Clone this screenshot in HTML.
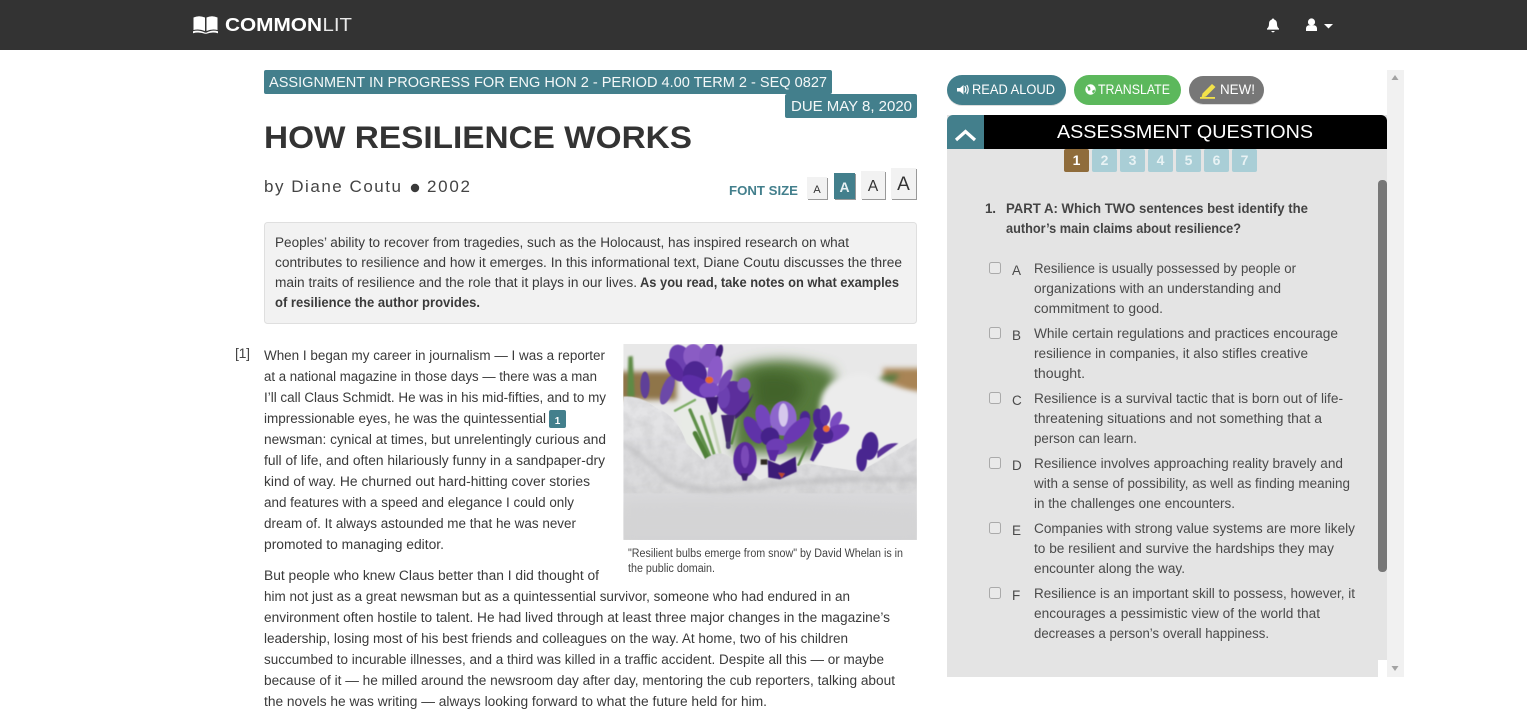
<!DOCTYPE html>
<html lang="en"><head><meta charset="utf-8"><title>How Resilience Works</title>
<style>
html,body{margin:0;padding:0;background:#fff;width:1527px;height:726px;overflow:hidden}
svg{display:block}
text{font-family:"Liberation Sans",sans-serif}
.b text,.b{font-size:13.5px;fill:#3a3a3a}
.q text{font-size:13.5px;fill:#4a4a4a}
.bd{font-weight:bold}
</style></head><body>
<svg width="1527" height="726" viewBox="0 0 1527 726" xmlns="http://www.w3.org/2000/svg">
<defs>
<filter id="bl1" x="-20%" y="-20%" width="140%" height="140%"><feGaussianBlur stdDeviation="1.500"/></filter>
<filter id="bl2" x="-30%" y="-30%" width="160%" height="160%"><feGaussianBlur stdDeviation="3"/></filter>
<filter id="bl6" x="-40%" y="-40%" width="180%" height="180%"><feGaussianBlur stdDeviation="8"/></filter>
<filter id="bl14" x="-50%" y="-50%" width="200%" height="200%"><feGaussianBlur stdDeviation="18"/></filter>
<filter id="sn" x="0" y="0" width="100%" height="100%"><feTurbulence type="fractalNoise" baseFrequency="0.03" numOctaves="3" seed="4"/><feColorMatrix values="0 0 0 0 0.45 0 0 0 0 0.45 0 0 0 0 0.46 1 0 0 0 -0.3"/><feComposite in2="SourceAlpha" operator="in"/></filter>
<clipPath id="ic"><rect x="10" y="12" width="881" height="588"/></clipPath>
<linearGradient id="sg" x1="0" y1="0" x2="0" y2="1"><stop offset="0" stop-color="#e6e6e8"/><stop offset=".55" stop-color="#dcdcde"/><stop offset="1" stop-color="#d2d2d3"/></linearGradient>
</defs>

<!-- nav -->
<rect width="1527" height="50" fill="#333"/>
<g fill="#fff">
<path d="M193.500 17.500Q199 15 205 17.500V31Q199 28.500 193.500 30Z"/>
<path d="M206.500 17.500Q212 15 217.500 17.500V30Q212 28.500 206.500 31Z"/>
<path d="M193 31.200Q199 29.500 205 32.600H206.500Q212 29.500 218 31.200V33.200Q212 31.500 206.500 33.800H205Q199 31.500 193 33.200Z"/>
<text x="225" y="31" font-size="18.500" font-weight="bold" textLength="97" lengthAdjust="spacingAndGlyphs">COMMON</text>
<text x="322.500" y="31" font-size="18.500" textLength="29.500" lengthAdjust="spacingAndGlyphs" fill="#e8e8e8">LIT</text>
<path d="M1273 18.500c.8 0 1.300.5 1.400 1.200 2 .6 2.600 2.300 2.600 4.300 0 2.200.7 3.500 2 4.600v1h-12v-1c1.300-1.100 2-2.400 2-4.600 0-2 .6-3.700 2.600-4.300.1-.7.600-1.200 1.400-1.200zM1271.300 31h3.400c-.2.900-.9 1.400-1.700 1.400s-1.500-.5-1.700-1.400z"/>
<circle cx="1311.500" cy="22" r="3.600"/>
<path d="M1306 31v-2.500c0-2 1.500-3.300 3.300-3.300h4.400c1.800 0 3.300 1.300 3.300 3.300V31z"/>
<path d="M1324 24h9l-4.500 4.500z"/>
</g>

<!-- assignment badges -->
<rect x="264" y="70" width="568" height="24" rx="2" fill="#437f8c"/>
<rect x="785" y="94" width="132" height="24" rx="2" fill="#437f8c"/>
<text x="269" y="87" font-size="15" fill="#f4f8f8" textLength="558" lengthAdjust="spacingAndGlyphs">ASSIGNMENT IN PROGRESS FOR ENG HON 2 - PERIOD 4.00 TERM 2 - SEQ 0827</text>
<text x="791" y="111" font-size="15" fill="#f4f8f8" textLength="121" lengthAdjust="spacingAndGlyphs">DUE MAY 8, 2020</text>

<text x="264" y="148" font-size="31.500" font-weight="bold" fill="#333" textLength="428" lengthAdjust="spacingAndGlyphs">HOW RESILIENCE WORKS</text>
<text x="264" y="192" font-size="17" fill="#444" textLength="137" lengthAdjust="spacing">by Diane Coutu</text>
<circle cx="415" cy="188" r="4.200" fill="#3a3a3a"/>
<text x="427" y="192" font-size="17" fill="#444" textLength="43" lengthAdjust="spacing">2002</text>

<!-- font size -->
<text x="729" y="195" font-size="13" font-weight="bold" fill="#437f8c" textLength="69" lengthAdjust="spacingAndGlyphs">FONT SIZE</text>
<g>
<rect x="808" y="178" width="20" height="22" fill="#999"/><rect x="807" y="177" width="20" height="22" fill="#f2f2f2"/>
<rect x="835" y="174" width="21" height="26" fill="#999"/><rect x="834" y="173" width="21" height="26" fill="#437f8c"/>
<rect x="862" y="172" width="24" height="28" fill="#999"/><rect x="861" y="171" width="24" height="28" fill="#f2f2f2"/>
<rect x="892" y="169" width="25" height="31" fill="#999"/><rect x="891" y="168" width="25" height="31" fill="#f2f2f2"/>
<text x="817" y="193" font-size="11" text-anchor="middle" fill="#333">A</text>
<text x="844.500" y="192" font-size="14" font-weight="bold" text-anchor="middle" fill="#e8f0f2">A</text>
<text x="873" y="191" font-size="15.500" text-anchor="middle" fill="#333">A</text>
<text x="903.500" y="190" font-size="19" text-anchor="middle" fill="#333">A</text>
</g>

<!-- intro -->
<rect x="264.500" y="222.500" width="652" height="101" rx="3" fill="#f2f2f2" stroke="#dfdfdf"/>
<g class="q">
<text x="275" y="247" textLength="574" lengthAdjust="spacingAndGlyphs" style="fill:#3a3a3a">Peoples’ ability to recover from tragedies, such as the Holocaust, has inspired research on what</text>
<text x="275" y="267" textLength="627" lengthAdjust="spacingAndGlyphs" style="fill:#3a3a3a">contributes to resilience and how it emerges. In this informational text, Diane Coutu discusses the three</text>
<text x="275" y="287" textLength="362" lengthAdjust="spacingAndGlyphs" style="fill:#3a3a3a">main traits of resilience and the role that it plays in our lives.</text>
<text x="640" y="287" textLength="259" lengthAdjust="spacingAndGlyphs" class="bd" style="fill:#3a3a3a">As you read, take notes on what examples</text>
<text x="275" y="307" textLength="205" lengthAdjust="spacingAndGlyphs" class="bd" style="fill:#3a3a3a">of resilience the author provides.</text>
</g>

<!-- body -->
<text x="235" y="358" font-size="14" fill="#444" textLength="15">[1]</text>
<g class="b">
<text x="264" y="360" textLength="341" lengthAdjust="spacingAndGlyphs">When I began my career in journalism — I was a reporter</text>
<text x="264" y="381" textLength="333" lengthAdjust="spacingAndGlyphs">at a national magazine in those days — there was a man</text>
<text x="264" y="402" textLength="342" lengthAdjust="spacingAndGlyphs">I’ll call Claus Schmidt. He was in his mid-fifties, and to my</text>
<text x="264" y="423" textLength="282" lengthAdjust="spacingAndGlyphs">impressionable eyes, he was the quintessential</text>
<text x="264" y="444" textLength="342" lengthAdjust="spacingAndGlyphs">newsman: cynical at times, but unrelentingly curious and</text>
<text x="264" y="465" textLength="341" lengthAdjust="spacingAndGlyphs">full of life, and often hilariously funny in a sandpaper-dry</text>
<text x="264" y="486" textLength="326" lengthAdjust="spacingAndGlyphs">kind of way. He churned out hard-hitting cover stories</text>
<text x="264" y="507" textLength="310" lengthAdjust="spacingAndGlyphs">and features with a speed and elegance I could only</text>
<text x="264" y="528" textLength="312" lengthAdjust="spacingAndGlyphs">dream of. It always astounded me that he was never</text>
<text x="264" y="549" textLength="180" lengthAdjust="spacingAndGlyphs">promoted to managing editor.</text>
<text x="264" y="580" textLength="335" lengthAdjust="spacingAndGlyphs">But people who knew Claus better than I did thought of</text>
<text x="264" y="601" textLength="586" lengthAdjust="spacingAndGlyphs">him not just as a great newsman but as a quintessential survivor, someone who had endured in an</text>
<text x="264" y="622" textLength="626" lengthAdjust="spacingAndGlyphs">environment often hostile to talent. He had lived through at least three major changes in the magazine’s</text>
<text x="264" y="643" textLength="584" lengthAdjust="spacingAndGlyphs">leadership, losing most of his best friends and colleagues on the way. At home, two of his children</text>
<text x="264" y="664" textLength="620" lengthAdjust="spacingAndGlyphs">succumbed to incurable illnesses, and a third was killed in a traffic accident. Despite all this — or maybe</text>
<text x="264" y="685" textLength="631" lengthAdjust="spacingAndGlyphs">because of it — he milled around the newsroom day after day, mentoring the cub reporters, talking about</text>
<text x="264" y="706" textLength="503" lengthAdjust="spacingAndGlyphs">the novels he was writing — always looking forward to what the future held for him.</text>
</g>
<rect x="549" y="410" width="17" height="18" rx="2" fill="#437f8c"/>
<text x="557.500" y="424" font-size="10" font-weight="bold" text-anchor="middle" fill="#fff">1</text>

<!-- photo -->
<g transform="translate(620 340) scale(.33333)" clip-path="url(#ic)">
<rect x="10" y="12" width="881" height="588" fill="#e8e8e8"/>
<rect x="-20" y="95" width="190" height="85" fill="#8f7448" filter="url(#bl6)"/>
<rect x="790" y="85" width="130" height="70" fill="#a98454" filter="url(#bl6)"/>
<path d="M335 90Q470 30 640 90Q660 200 590 340H340Z" fill="#577a3e" filter="url(#bl14)"/>
<path d="M400 110Q470 80 540 120Q570 170 500 210H410Z" fill="#43642c" filter="url(#bl14)"/>
<path d="M770 125Q800 95 840 105L810 135Z" fill="#587a40" filter="url(#bl6)"/>
<path d="M600 190Q610 110 730 100Q810 130 900 165V400H580Z" fill="#ececec" filter="url(#bl6)"/>
<path d="M170 190H300V340H190Z" fill="#e8ebe6" filter="url(#bl6)"/>
<path d="M25 50L38 48L44 170H22Z" fill="#5d8a45" filter="url(#bl2)"/>
<g fill="none" stroke-linecap="round" filter="url(#bl1)">
<path d="M165 212L225 180" stroke="#7fae68" stroke-width="7"/>
<path d="M210 210L270 350" stroke="#5f9048" stroke-width="10"/>
<path d="M225 280L262 355" stroke="#4f8038" stroke-width="14"/>
<path d="M270 220L300 340" stroke="#c9d6bd" stroke-width="9"/>
<path d="M245 230L285 350" stroke="#6e9e55" stroke-width="9"/>
<path d="M360 220L335 310" stroke="#5d8a45" stroke-width="8"/>
<path d="M325 230L325 320" stroke="#4a3a70" stroke-width="14"/>
<path d="M560 320L535 375" stroke="#5d8a45" stroke-width="7"/>
</g>
<!-- snow foreground -->
<path d="M10 170Q60 165 110 205Q170 225 200 310L250 360Q290 330 320 345L420 420L560 370L720 395L780 360L890 295V600H10Z" fill="url(#sg)" filter="url(#bl1)"/>
<path d="M10 170Q60 165 110 205Q170 225 200 310L250 360Q290 330 320 345L420 420L560 370L720 395L780 360L890 295V460H10Z" fill="#888" opacity=".55" filter="url(#sn)"/>
<path d="M10 490Q300 470 890 510V600H10Z" fill="#d4d4d5" filter="url(#bl14)"/>
<path d="M10 310Q80 360 130 410Q210 470 420 440Q620 410 890 420" fill="none" stroke="#b0b0b2" stroke-width="7" filter="url(#bl6)"/>
<g filter="url(#bl1)">
<!-- blurred left buds -->
<ellipse cx="75" cy="135" rx="14" ry="40" fill="#5f3f98"/>
<ellipse cx="142" cy="150" rx="17" ry="46" transform="rotate(20 142 150)" fill="#6c4aa8"/>
<!-- back flower upper right -->
<ellipse cx="340" cy="175" rx="48" ry="52" fill="#5b2f9c"/>
<ellipse cx="372" cy="135" rx="20" ry="22" fill="#7d56b8"/>
<ellipse cx="310" cy="170" rx="20" ry="35" fill="#6c3fb0"/>
<path d="M345 225Q385 190 400 160Q385 210 345 238Z" fill="#3f2070"/>
<path d="M303 225L345 225L330 305L318 305Z" fill="#45276f"/>
<!-- top flower -->
<ellipse cx="183" cy="58" rx="33" ry="46" transform="rotate(-25 183 58)" fill="#6c3fb0"/>
<ellipse cx="220" cy="48" rx="30" ry="36" fill="#8a5bc4"/>
<ellipse cx="265" cy="46" rx="27" ry="38" transform="rotate(15 265 46)" fill="#8558c0"/>
<ellipse cx="298" cy="36" rx="10" ry="23" transform="rotate(15 298 36)" fill="#3f1f78"/>
<ellipse cx="165" cy="90" rx="20" ry="40" transform="rotate(-35 165 90)" fill="#5a2b9e"/>
<ellipse cx="225" cy="103" rx="36" ry="40" fill="#4e2792"/>
<ellipse cx="285" cy="95" rx="22" ry="48" transform="rotate(10 285 95)" fill="#8b5ac8"/>
<ellipse cx="315" cy="122" rx="14" ry="38" transform="rotate(30 315 122)" fill="#7346b4"/>
<ellipse cx="235" cy="140" rx="55" ry="26" transform="rotate(30 235 140)" fill="#5d2ea8"/>
<ellipse cx="268" cy="150" rx="30" ry="24" fill="#7a4cc0"/>
<path d="M255 172L295 170L290 215L275 225Z" fill="#3c1f70"/>
<ellipse cx="268" cy="120" rx="12" ry="10" fill="#e3682e"/>
<!-- middle flower -->
<ellipse cx="400" cy="270" rx="22" ry="45" transform="rotate(-30 400 270)" fill="#5f32a8"/>
<ellipse cx="430" cy="235" rx="22" ry="42" transform="rotate(-15 430 235)" fill="#7345bc"/>
<ellipse cx="490" cy="235" rx="40" ry="52" fill="#8d66cc"/>
<ellipse cx="490" cy="225" rx="14" ry="35" fill="#d6c8ec"/>
<ellipse cx="555" cy="235" rx="16" ry="22" fill="#4a2590"/>
<ellipse cx="530" cy="272" rx="22" ry="52" transform="rotate(45 530 272)" fill="#6a37b2"/>
<ellipse cx="450" cy="290" rx="28" ry="28" fill="#45208a"/>
<ellipse cx="470" cy="320" rx="32" ry="24" fill="#6d3cb4"/>
<path d="M440 330L478 330L465 365L450 360Z" fill="#5a2ca0"/>
<!-- right flower -->
<ellipse cx="600" cy="240" rx="20" ry="35" transform="rotate(-15 600 240)" fill="#4b2690"/>
<ellipse cx="615" cy="225" rx="16" ry="30" fill="#5a30a0"/>
<ellipse cx="648" cy="240" rx="14" ry="28" transform="rotate(30 648 240)" fill="#7a4cc0"/>
<ellipse cx="640" cy="282" rx="52" ry="22" transform="rotate(-25 640 282)" fill="#6a37b2"/>
<ellipse cx="610" cy="285" rx="30" ry="26" fill="#4b2690"/>
<path d="M590 305L612 315L580 365L570 360Z" fill="#4b2690"/>
<ellipse cx="619" cy="266" rx="10" ry="10" fill="#ea6a2d"/>
<!-- bud -->
<ellipse cx="375" cy="358" rx="35" ry="52" fill="#5a2a9c"/>
<ellipse cx="375" cy="350" rx="12" ry="34" fill="#7a48b8"/>
<path d="M362 400H386L380 422H368Z" fill="#3f2070"/>
<!-- dark bud -->
<path d="M443 360L480 375L527 350L530 395L480 418L445 412Z" fill="#3c1f78"/>
<path d="M475 398L495 400L485 414Z" fill="#c14a2a"/>
<path d="M422 358h20v16h-20z" fill="#2d2a20"/>
<!-- right bud -->
<ellipse cx="750" cy="318" rx="25" ry="42" transform="rotate(5 750 318)" fill="#4a2590"/>
<ellipse cx="725" cy="360" rx="16" ry="34" fill="#4a2590"/>
<path d="M772 335Q800 305 835 310Q810 328 772 355Z" fill="#5a3098"/>
</g>
</g>
<text x="628" y="557" font-size="11.500" fill="#444" textLength="275" lengthAdjust="spacingAndGlyphs">"Resilient bulbs emerge from snow" by David Whelan is in</text>
<text x="628" y="572" font-size="11.500" fill="#444" textLength="87" lengthAdjust="spacingAndGlyphs">the public domain.</text>

<!-- right panel -->
<rect x="1387" y="70" width="17" height="607" fill="#f1f1f1"/>
<path d="M1391.500 80l3.500-5 3.500 5z" fill="#a3a3a3"/>
<path d="M1391.500 666l3.500 5 3.500-5z" fill="#a3a3a3"/>
<rect x="947" y="115" width="440" height="562" fill="#e4e4e4"/>
<rect x="1378" y="660" width="9" height="17" fill="#fff"/>
<rect x="1378" y="180" width="9" height="392" rx="4" fill="#777"/>

<rect x="947" y="76" width="119" height="30" rx="15" fill="#bbb" opacity=".5"/>
<rect x="947" y="75" width="119" height="30" rx="15" fill="#437f8c"/>
<path d="M957 88h3l3.500-3v9.500l-3.500-3h-3z" fill="#fff"/>
<path d="M964.800 86q2 3.300 0 6.600M966.800 85q2.800 4.600 0 9" fill="none" stroke="#fff" stroke-width="1.200"/>
<text x="972" y="94" font-size="13.500" fill="#fff" textLength="83" lengthAdjust="spacingAndGlyphs">READ ALOUD</text>
<rect x="1074" y="75" width="107" height="30" rx="15" fill="#5cb85c"/>
<circle cx="1090.500" cy="89.500" r="5.200" fill="#fff"/>
<path d="M1087 86l3 1 .5 3-2 1zM1092 91l2.500-1.500.5 2-2 2z" fill="#5cb85c"/>
<text x="1098" y="94" font-size="13.500" fill="#fff" textLength="72" lengthAdjust="spacingAndGlyphs">TRANSLATE</text>
<rect x="1189" y="77" width="75" height="28" rx="14" fill="#bbb" opacity=".5"/>
<rect x="1189" y="76" width="75" height="28" rx="14" fill="#777"/>
<path d="M1202.500 93.500l9.500-9.500 3.500 3-9.500 9.500-4.500 1z" fill="#f2e24a"/>
<rect x="1200" y="97" width="15" height="1.800" fill="#f2e24a"/>
<text x="1220" y="94" font-size="13.500" fill="#fff" textLength="35" lengthAdjust="spacingAndGlyphs">NEW!</text>

<path d="M984 115H1381a6 6 0 0 1 6 6V149H984Z" fill="#000"/>
<path d="M984 115H953a6 6 0 0 0-6 6V149H984Z" fill="#437f8c"/>
<path d="M956 140l9.500-8.500 9.500 8.500" fill="none" stroke="#fff" stroke-width="3.200"/>
<text x="1057" y="138" font-size="18.500" fill="#fff" textLength="256" lengthAdjust="spacingAndGlyphs">ASSESSMENT QUESTIONS</text>

<g font-size="14" font-weight="bold" text-anchor="middle" fill="#fff">
<rect x="1064" y="149" width="25" height="23" rx="2" fill="#8f6c3b"/>
<rect x="1092" y="149" width="25" height="23" rx="2" fill="#a9ced6"/>
<rect x="1120" y="149" width="25" height="23" rx="2" fill="#a9ced6"/>
<rect x="1148" y="149" width="25" height="23" rx="2" fill="#a9ced6"/>
<rect x="1176" y="149" width="25" height="23" rx="2" fill="#a9ced6"/>
<rect x="1204" y="149" width="25" height="23" rx="2" fill="#a9ced6"/>
<rect x="1232" y="149" width="25" height="23" rx="2" fill="#a9ced6"/>
<text x="1076.500" y="165">1</text><text x="1104.500" y="165" fill="#e8f2f4">2</text><text x="1132.500" y="165" fill="#e8f2f4">3</text><text x="1160.500" y="165" fill="#e8f2f4">4</text><text x="1188.500" y="165" fill="#e8f2f4">5</text><text x="1216.500" y="165" fill="#e8f2f4">6</text><text x="1244.500" y="165" fill="#e8f2f4">7</text>
</g>

<g class="q">
<text x="985" y="213" textLength="11" class="bd" style="fill:#444">1.</text>
<text x="1006" y="213" textLength="302" lengthAdjust="spacingAndGlyphs" class="bd" style="fill:#444">PART A: Which TWO sentences best identify the</text>
<text x="1006" y="233" textLength="235" lengthAdjust="spacingAndGlyphs" class="bd" style="fill:#444">author’s main claims about resilience?</text>

<text x="1012" y="275">A</text>
<text x="1034" y="273" textLength="262" lengthAdjust="spacingAndGlyphs">Resilience is usually possessed by people or</text>
<text x="1034" y="293" textLength="247" lengthAdjust="spacingAndGlyphs">organizations with an understanding and</text>
<text x="1034" y="313" textLength="129" lengthAdjust="spacingAndGlyphs">commitment to good.</text>

<text x="1012" y="340">B</text>
<text x="1034" y="338" textLength="304" lengthAdjust="spacingAndGlyphs">While certain regulations and practices encourage</text>
<text x="1034" y="358" textLength="274" lengthAdjust="spacingAndGlyphs">resilience in companies, it also stifles creative</text>
<text x="1034" y="378" textLength="51" lengthAdjust="spacingAndGlyphs">thought.</text>

<text x="1012" y="405">C</text>
<text x="1034" y="403" textLength="309" lengthAdjust="spacingAndGlyphs">Resilience is a survival tactic that is born out of life-</text>
<text x="1034" y="423" textLength="288" lengthAdjust="spacingAndGlyphs">threatening situations and not something that a</text>
<text x="1034" y="443" textLength="103" lengthAdjust="spacingAndGlyphs">person can learn.</text>

<text x="1012" y="470">D</text>
<text x="1034" y="468" textLength="309" lengthAdjust="spacingAndGlyphs">Resilience involves approaching reality bravely and</text>
<text x="1034" y="488" textLength="316" lengthAdjust="spacingAndGlyphs">with a sense of possibility, as well as finding meaning</text>
<text x="1034" y="508" textLength="201" lengthAdjust="spacingAndGlyphs">in the challenges one encounters.</text>

<text x="1012" y="535">E</text>
<text x="1034" y="533" textLength="321" lengthAdjust="spacingAndGlyphs">Companies with strong value systems are more likely</text>
<text x="1034" y="553" textLength="300" lengthAdjust="spacingAndGlyphs">to be resilient and survive the hardships they may</text>
<text x="1034" y="573" textLength="151" lengthAdjust="spacingAndGlyphs">encounter along the way.</text>

<text x="1012" y="600">F</text>
<text x="1034" y="598" textLength="321" lengthAdjust="spacingAndGlyphs">Resilience is an important skill to possess, however, it</text>
<text x="1034" y="618" textLength="286" lengthAdjust="spacingAndGlyphs">encourages a pessimistic view of the world that</text>
<text x="1034" y="638" textLength="235" lengthAdjust="spacingAndGlyphs">decreases a person’s overall happiness.</text>
</g>
<g fill="#e9e9e9" stroke="#aaa">
<rect x="989.500" y="262.500" width="11" height="11" rx="2"/>
<rect x="989.500" y="327.500" width="11" height="11" rx="2"/>
<rect x="989.500" y="392.500" width="11" height="11" rx="2"/>
<rect x="989.500" y="457.500" width="11" height="11" rx="2"/>
<rect x="989.500" y="522.500" width="11" height="11" rx="2"/>
<rect x="989.500" y="587.500" width="11" height="11" rx="2"/>
</g>
</svg>
</body></html>
